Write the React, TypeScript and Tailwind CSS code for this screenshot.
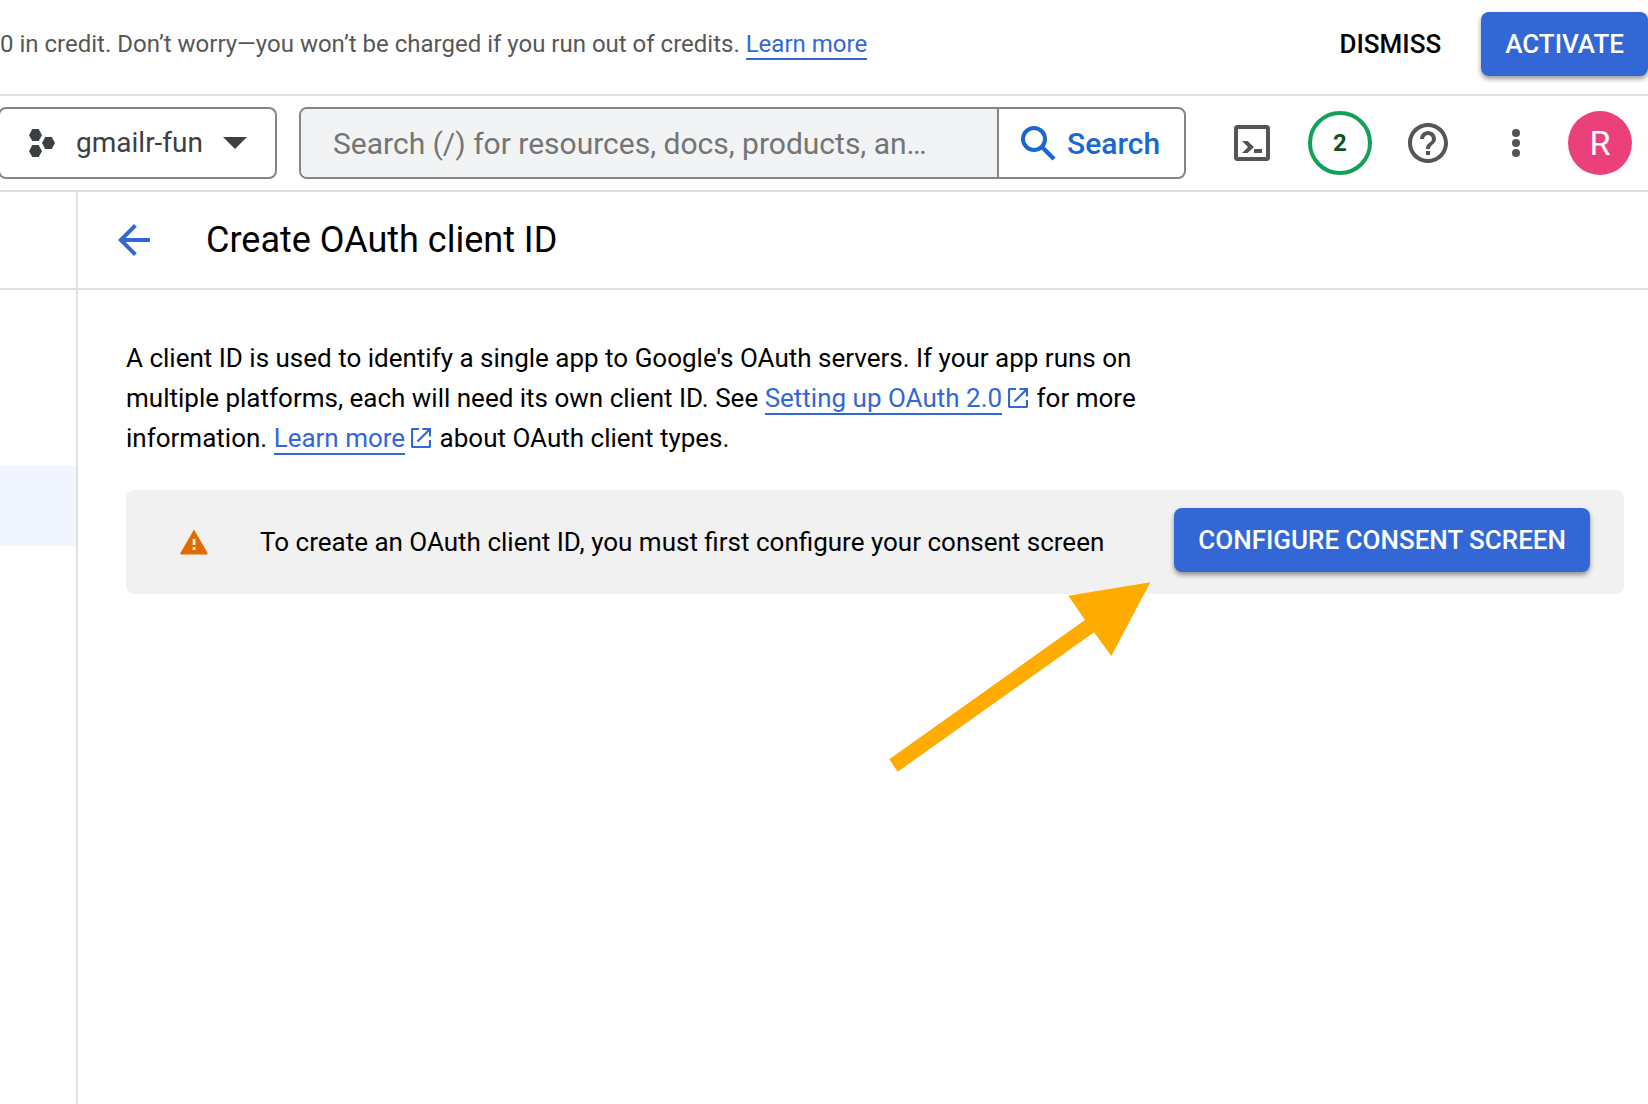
import type { ReactNode } from "react";
import { MdArrowBack, MdHelpOutline } from "react-icons/md";

function ProjectIcon() {
  return (
    <svg viewBox="0 0 26 28" className="h-7 w-[26px] fill-[#3c4043]" aria-hidden="true">
      <path d="M3.3 0h6.4L13 6.2 9.7 12H3.3L0 6.2z" />
      <path d="M3.3 16h6.4l3.3 6.2L9.7 28H3.3L0 22.2z" />
      <path d="M16.3 8h6.4L26 14l-3.3 6h-6.4L13 14z" />
    </svg>
  );
}

function CaretIcon() {
  return (
    <svg viewBox="0 0 24 12" className="h-3 w-6 fill-[#3c4043]" aria-hidden="true">
      <path d="M0 0h24L12 12z" />
    </svg>
  );
}

function SearchIcon() {
  return (
    <svg viewBox="0 0 36 36" className="size-9" fill="none" stroke="currentColor" aria-hidden="true">
      <circle cx="14" cy="14" r="11" strokeWidth="4" />
      <path d="M22 22l12 12" strokeWidth="4.5" />
    </svg>
  );
}

function TerminalIcon() {
  return (
    <svg viewBox="0 0 36 36" className="size-9" aria-hidden="true">
      <rect x="2" y="2" width="32" height="32" rx="1.5" fill="none" stroke="#555" strokeWidth="4" />
      <path d="M8 16h5.5l6.5 6-6.5 6H8l6-6z" fill="#555" />
      <path d="M20 24h8v4h-8z" fill="#555" />
    </svg>
  );
}

function MoreIcon() {
  return (
    <svg viewBox="0 0 8 28" className="h-7 w-2 fill-[#555]" aria-hidden="true">
      <circle cx="4" cy="4" r="4" />
      <circle cx="4" cy="14" r="4" />
      <circle cx="4" cy="24" r="4" />
    </svg>
  );
}

function WarningIcon() {
  return (
    <svg viewBox="0 0 28 26" className="h-[26px] w-7" aria-hidden="true">
      <path d="M14 .5 27.6 24q.4 1.5-1 1.5H1.4Q0 25.5.4 24z" fill="#e06c00" />
      <path d="M12.7 10h2.8v6h-2.8zM12.7 18h2.8v3h-2.8z" fill="#f5efe8" />
    </svg>
  );
}

function ExternalIcon() {
  return (
    <svg viewBox="0 0 20 20" className="mr-0.5 ml-1.5 inline-block size-5 align-[-1px]" aria-hidden="true">
      <path d="M8 1H2Q1 1 1 2v16q0 1 1 1h16q1 0 1-1v-6M11.5 1H19v7.5M19 1 6.5 13.5" fill="none" stroke="#3367d6" strokeWidth="2.2" />
    </svg>
  );
}

function TextLink({ children }: { children: ReactNode }) {
  return (
    <a href="#" className="border-b-2 border-[#3367d6] text-[#3367d6]">
      {children}
    </a>
  );
}

function PrimaryButton({ children }: { children: ReactNode }) {
  return (
    <button
      type="button"
      className="h-16 rounded-lg bg-[#3367d6] px-6 text-[26px] font-medium whitespace-nowrap text-white shadow-[0_3px_5px_rgba(0,0,0,0.4)]"
    >
      {children}
    </button>
  );
}

function PointerArrow() {
  return (
    <svg viewBox="0 0 264 192" className="absolute top-[72px] right-full mr-[22px] h-48 w-[264px] fill-[#ffab00]" aria-hidden="true">
      <path d="M1.3 179.3 197 40 180.3 15.7 262.3 2.3 223.3 76 206 52.3 9.7 191.7z" />
    </svg>
  );
}

export default function App() {
  return (
    <div className="flex min-h-screen flex-col overflow-hidden bg-white font-[Roboto,sans-serif] text-[26px] text-black">
      <section className="flex items-center justify-between border-b-2 border-[#e0e0e0] pt-3 pb-[18px]">
        <p className="text-2xl whitespace-nowrap text-[#575757]">
          0 in credit. Don’t worry—you won’t be charged if you run out of credits. <TextLink>Learn more</TextLink>
        </p>
        <div className="flex items-center gap-4">
          <button type="button" className="h-16 px-6 font-medium">
            DISMISS
          </button>
          <PrimaryButton>ACTIVATE</PrimaryButton>
        </div>
      </section>

      <header className="flex h-24 items-center border-b-2 border-[#dadce0] pr-4">
        <button
          type="button"
          className="-ml-0.5 flex h-[72px] w-[279px] shrink-0 items-center rounded-lg border-2 border-[#80868b] pl-[29px] text-[28px] text-[#3c4043]"
        >
          <ProjectIcon />
          <span className="mr-5 ml-[21px]">gmailr-fun</span>
          <CaretIcon />
        </button>

        <form className="ml-[22px] flex h-[72px] max-w-[887px] flex-1 overflow-hidden rounded-lg border-2 border-[#80868b]">
          <input
            type="text"
            aria-label="Search resources, docs and products"
            placeholder="Search (/) for resources, docs, products, an…"
            className="min-w-0 flex-1 bg-[#f1f3f4] pl-8 text-[30px] placeholder:text-[#757575] placeholder:opacity-100"
          />
          <button
            type="button"
            className="flex w-[187px] items-center gap-[11px] border-l-2 border-[#80868b] pl-[21px] text-[30px] font-medium text-[#1967d2]"
          >
            <SearchIcon />
            Search
          </button>
        </form>

        <div className="ml-auto flex items-center">
          <button type="button" aria-label="Cloud Shell" className="mr-[38px]">
            <TerminalIcon />
          </button>
          <button
            type="button"
            aria-label="2 notifications"
            className="mr-8 size-16 rounded-full border-4 border-[#12a05a] text-2xl font-bold text-[#0d5427]"
          >
            2
          </button>
          <button type="button" aria-label="Help" className="mr-[60px] text-[#555]">
            <MdHelpOutline className="size-12" aria-hidden="true" />
          </button>
          <button type="button" aria-label="More options" className="mr-12">
            <MoreIcon />
          </button>
          <button type="button" aria-label="Account" className="size-16 rounded-full bg-[#ec407a] text-[34px] text-white">
            R
          </button>
        </div>
      </header>

      <div className="flex flex-1">
        <nav aria-label="Section" className="w-[78px] shrink-0 border-r-2 border-[#e0e0e0]">
          <div className="h-[98px] border-b-2 border-[#e0e0e0]" />
          <a href="#" aria-label="Credentials" className="mt-44 block h-20 bg-[#f0f5ff]" />
        </nav>

        <main className="min-w-0 flex-1">
          <div className="flex h-[98px] items-center border-b-2 border-[#e0e0e0] pl-8">
            <button type="button" aria-label="Back" className="mr-12 text-[#3367d6]">
              <MdArrowBack className="size-12" aria-hidden="true" />
            </button>
            <h1 className="text-4xl">Create OAuth client ID</h1>
          </div>

          <div className="pt-12 pr-6 pl-12">
            <p className="max-w-[1030px] leading-10">
              A client ID is used to identify a single app to Google's OAuth servers. If your app runs on multiple
              platforms, each will need its own client ID. See <TextLink>Setting up OAuth 2.0</TextLink>
              <ExternalIcon /> for more information. <TextLink>Learn more</TextLink>
              <ExternalIcon /> about OAuth client types.
            </p>

            <div className="mt-8 flex items-center rounded-lg bg-[#f1f1f1] py-[18px] pr-[34px] pl-[54px]">
              <WarningIcon />
              <p className="ml-[52px] flex-1">To create an OAuth client ID, you must first configure your consent screen</p>
              <div className="relative mb-1">
                <PrimaryButton>CONFIGURE CONSENT SCREEN</PrimaryButton>
                <PointerArrow />
              </div>
            </div>
          </div>
        </main>
      </div>
    </div>
  );
}
